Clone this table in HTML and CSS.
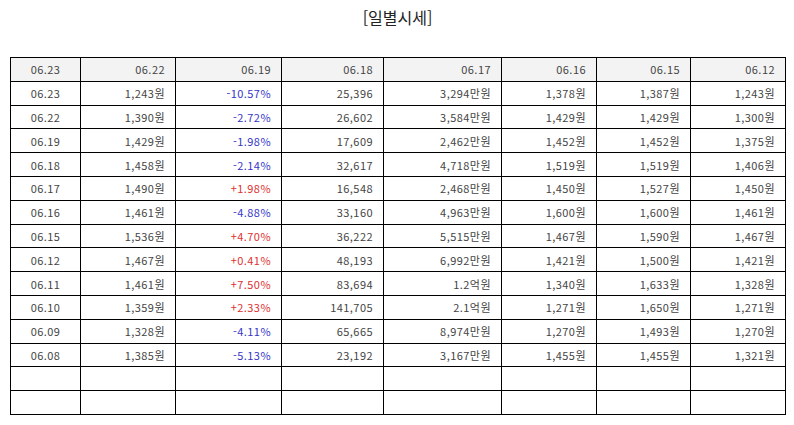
FILE: index.html
```html
<!DOCTYPE html>
<html lang="ko">
<head>
<meta charset="utf-8">
<title>일별시세</title>
<link rel="stylesheet" href="styles.css">
</head>
<body>
<div class="page">
  <div class="title">[일별시세]</div>
  <table class="prices">
    <colgroup>
      <col class="c1"><col class="c2"><col class="c3"><col class="c4"><col class="c5"><col class="c6"><col class="c7"><col class="c8">
    </colgroup>
    <thead>
      <tr><th class="date">06.23</th><th>06.22</th><th>06.19</th><th>06.18</th><th>06.17</th><th>06.16</th><th>06.15</th><th>06.12</th></tr>
    </thead>
    <tbody>
      <tr><td class="date">06.23</td><td>1,243원</td><td class="dn">-10.57%</td><td>25,396</td><td>3,294만원</td><td>1,378원</td><td>1,387원</td><td>1,243원</td></tr>
      <tr><td class="date">06.22</td><td>1,390원</td><td class="dn">-2.72%</td><td>26,602</td><td>3,584만원</td><td>1,429원</td><td>1,429원</td><td>1,300원</td></tr>
      <tr><td class="date">06.19</td><td>1,429원</td><td class="dn">-1.98%</td><td>17,609</td><td>2,462만원</td><td>1,452원</td><td>1,452원</td><td>1,375원</td></tr>
      <tr><td class="date">06.18</td><td>1,458원</td><td class="dn">-2.14%</td><td>32,617</td><td>4,718만원</td><td>1,519원</td><td>1,519원</td><td>1,406원</td></tr>
      <tr><td class="date">06.17</td><td>1,490원</td><td class="up">+1.98%</td><td>16,548</td><td>2,468만원</td><td>1,450원</td><td>1,527원</td><td>1,450원</td></tr>
      <tr><td class="date">06.16</td><td>1,461원</td><td class="dn">-4.88%</td><td>33,160</td><td>4,963만원</td><td>1,600원</td><td>1,600원</td><td>1,461원</td></tr>
      <tr><td class="date">06.15</td><td>1,536원</td><td class="up">+4.70%</td><td>36,222</td><td>5,515만원</td><td>1,467원</td><td>1,590원</td><td>1,467원</td></tr>
      <tr><td class="date">06.12</td><td>1,467원</td><td class="up">+0.41%</td><td>48,193</td><td>6,992만원</td><td>1,421원</td><td>1,500원</td><td>1,421원</td></tr>
      <tr><td class="date">06.11</td><td>1,461원</td><td class="up">+7.50%</td><td>83,694</td><td>1.2억원</td><td>1,340원</td><td>1,633원</td><td>1,328원</td></tr>
      <tr><td class="date">06.10</td><td>1,359원</td><td class="up">+2.33%</td><td>141,705</td><td>2.1억원</td><td>1,271원</td><td>1,650원</td><td>1,271원</td></tr>
      <tr><td class="date">06.09</td><td>1,328원</td><td class="dn">-4.11%</td><td>65,665</td><td>8,974만원</td><td>1,270원</td><td>1,493원</td><td>1,270원</td></tr>
      <tr><td class="date">06.08</td><td>1,385원</td><td class="dn">-5.13%</td><td>23,192</td><td>3,167만원</td><td>1,455원</td><td>1,455원</td><td>1,321원</td></tr>
      <tr class="empty"><td></td><td></td><td></td><td></td><td></td><td></td><td></td><td></td></tr>
      <tr class="empty"><td></td><td></td><td></td><td></td><td></td><td></td><td></td><td></td></tr>
    </tbody>
  </table>
</div>
</body>
</html>
```

FILE: styles.css
```css
html, body {
  margin: 0;
  padding: 0;
  background: #ffffff;
}
.page {
  padding: 0 9px 0 10px;
  font-family: "Noto Sans CJK KR", "Noto Sans", sans-serif;
  color: #444444;
}
.title {
  text-align: center;
  font-size: 16px;
  line-height: 20px;
  padding-top: 7px;
  height: 57px;
  box-sizing: border-box;
  color: #222222;
}
.prices {
  width: 775px;
  border-collapse: collapse;
  table-layout: fixed;
  font-size: 11px;
  letter-spacing: 0.45px;
}
.c1 { width: 70px; }
.c2 { width: 95px; }
.c3 { width: 106px; }
.c4 { width: 102px; }
.c5 { width: 118px; }
.c6 { width: 95px; }
.c7 { width: 94px; }
.c8 { width: 95px; }
.prices th, .prices td {
  border: 1px solid #000000;
  height: 23.8px;
  padding: 0 10px 0 4px;
  text-align: right;
  font-weight: normal;
  line-height: 14px;
  box-sizing: border-box;
}
.prices th {
  background: #f3f3f3;
}
.prices .date {
  text-align: center;
  padding: 0;
}
.prices .dn { color: #3535c8; }
.prices .up { color: #e03030; }
```
